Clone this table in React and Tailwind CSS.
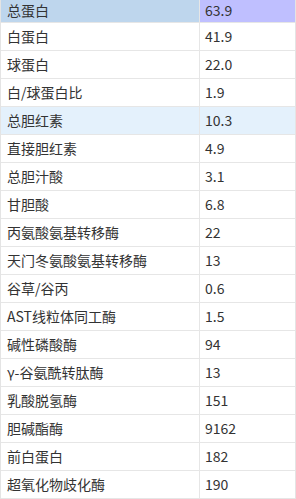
const rows = [
  ['总蛋白', '63.9'],
  ['白蛋白', '41.9'],
  ['球蛋白', '22.0'],
  ['白/球蛋白比', '1.9'],
  ['总胆红素', '10.3'],
  ['直接胆红素', '4.9'],
  ['总胆汁酸', '3.1'],
  ['甘胆酸', '6.8'],
  ['丙氨酸氨基转移酶', '22'],
  ['天门冬氨酸氨基转移酶', '13'],
  ['谷草/谷丙', '0.6'],
  ['AST线粒体同工酶', '1.5'],
  ['碱性磷酸酶', '94'],
  ['γ-谷氨酰转肽酶', '13'],
  ['乳酸脱氢酶', '151'],
  ['胆碱酯酶', '9162'],
  ['前白蛋白', '182'],
  ['超氧化物歧化酶', '190'],
]

export default function App() {
  return (
    <div
      className="w-[296px] h-[499px] overflow-hidden bg-white border-l border-r border-[#e4e4e4] text-[14px] text-[#333333]"
      style={{ fontFamily: '"Microsoft YaHei", "Noto Sans CJK SC", sans-serif' }}
    >
      {rows.map(([name, value], i) => {
        const first = i === 0
        const hl = i === 4
        return (
          <div
            key={name}
            className={
              'flex border-b border-[#e6e6e6] ' +
              (first ? 'h-[23px] ' : 'h-[28px] ') +
              (hl ? 'bg-[#e4f1fc]' : '')
            }
          >
            <div
              className={
                'w-[199px] shrink-0 flex items-center pl-[6px] border-r border-[#e6e6e6] ' +
                (first ? 'bg-[#bed6ed] pb-[2px]' : '')
              }
            >
              {name}
            </div>
            <div
              className={
                'flex-1 flex items-center pl-[5px] ' +
                (first ? 'bg-[#bfbfff] pb-[2px]' : '')
              }
            >
              {value}
            </div>
          </div>
        )
      })}
    </div>
  )
}
